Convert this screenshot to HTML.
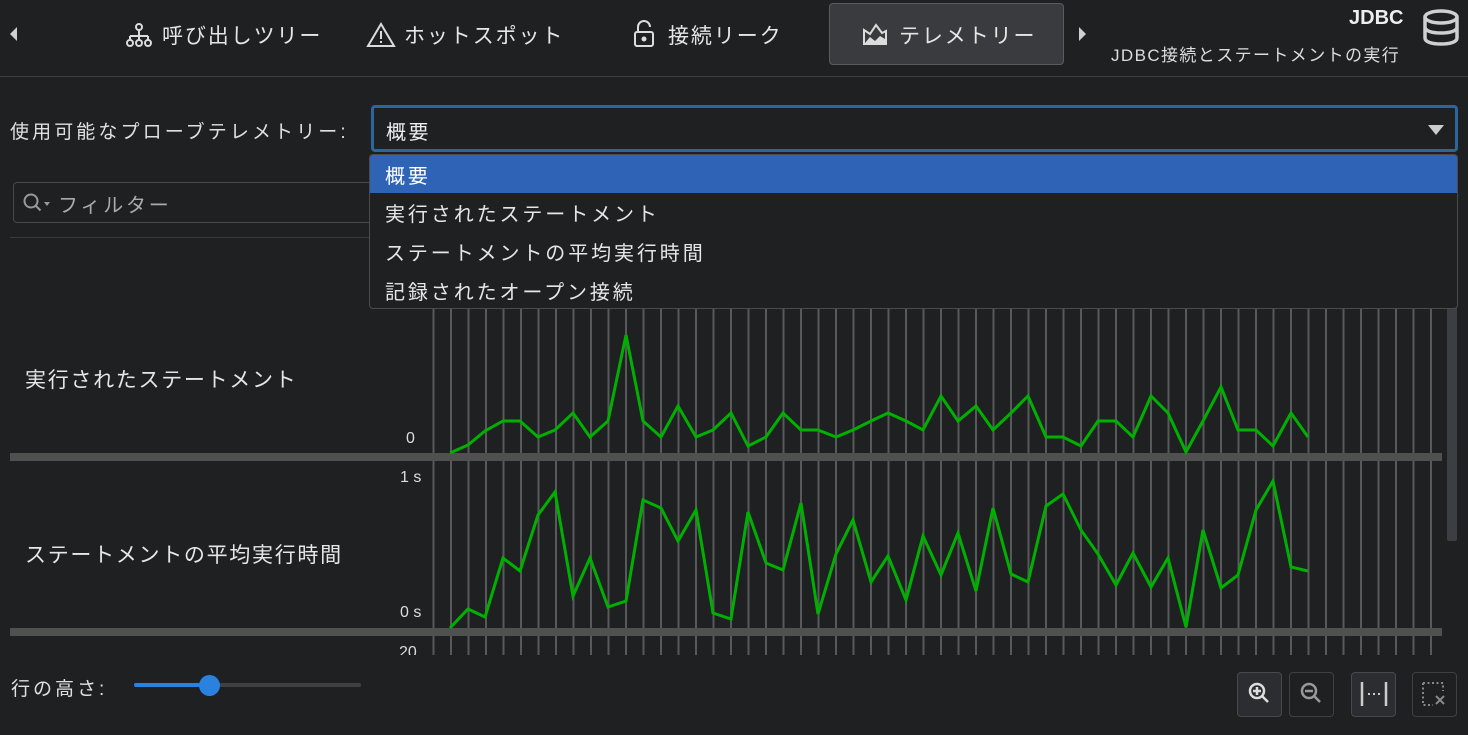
<!DOCTYPE html>
<html><head><meta charset="utf-8">
<style>
*{margin:0;padding:0;box-sizing:border-box}
body{width:1468px;height:735px;background:#1f2022;color:#dcdcdc;font-family:"Liberation Sans","Noto Sans CJK JP",sans-serif;position:relative;overflow:hidden}
.a{position:absolute;white-space:nowrap}
.tab{font-size:21px;color:#e6e6e6;letter-spacing:1.9px}
.it{font-size:20px;color:#e6e6e6;letter-spacing:2.9px}
</style></head><body>
<!-- toolbar -->
<svg class="a" style="left:8px;top:26px" width="10" height="16"><path d="M9 1 L2 8 L9 15Z" fill="#d0d0d0"/></svg>
<svg class="a" style="left:125px;top:22px" width="28" height="26" fill="none" stroke="#dcdcdc" stroke-width="2"><circle cx="14" cy="5" r="3"/><path d="M14 8v6M5 14h18M5 14v4M14 14v4M23 14v4"/><circle cx="5" cy="21" r="3"/><circle cx="14" cy="21" r="3"/><circle cx="23" cy="21" r="3"/></svg>
<div class="a tab" style="left:162px;top:20px">呼び出しツリー</div>
<svg class="a" style="left:366px;top:22px" width="30" height="26" fill="none" stroke="#dcdcdc" stroke-width="2"><path d="M15 2 L28 24 H2Z"/><path d="M15 9v8M15 19v2"/></svg>
<div class="a tab" style="left:404px;top:20px">ホットスポット</div>
<svg class="a" style="left:633px;top:20px" width="22" height="28" fill="none" stroke="#dcdcdc" stroke-width="2"><path d="M5 12V7a6 6 0 0 1 12 0"/><rect x="2" y="12" width="18" height="14" rx="2"/><circle cx="11" cy="19" r="1.5" fill="#dcdcdc"/></svg>
<div class="a tab" style="left:668px;top:20px">接続リーク</div>
<div class="a" style="left:829px;top:3px;width:235px;height:62px;background:#3a3b3e;border:1px solid #5a5b5e;border-radius:4px"></div>
<svg class="a" style="left:862px;top:22px" width="26" height="24"><path d="M2 22V8l6 4 6-9 6 8 4-2v13Z" fill="none" stroke="#dcdcdc" stroke-width="2"/><path d="M3 21l5-6 5 4 5-5 5 3v4H3Z" fill="#dcdcdc"/></svg>
<div class="a tab" style="left:899px;top:20px">テレメトリー</div>
<svg class="a" style="left:1078px;top:26px" width="10" height="16"><path d="M1 1 L8 8 L1 15Z" fill="#d0d0d0"/></svg>
<div class="a" style="left:1349px;top:7px;font-size:20px;font-weight:bold;color:#eee">JDBC</div>
<div class="a" style="left:1111px;top:41px;font-size:17px;color:#ddd;letter-spacing:1.4px">JDBC接続とステートメントの実行</div>
<svg class="a" style="left:1422px;top:9px" width="38" height="38" fill="none" stroke="#d0d0d0" stroke-width="3.5"><ellipse cx="19" cy="8" rx="16" ry="6"/><path d="M3 8v21c0 4 7 6 16 6s16-2 16-6V8M3 18c0 4 7 6 16 6s16-2 16-6"/></svg>
<div class="a" style="left:0;top:76px;width:1468px;height:1px;background:#3e3f42"></div>
<!-- combo -->
<div class="a" style="left:10px;top:117px;font-size:19px;color:#e0e0e0;letter-spacing:3.1px">使用可能なプローブテレメトリー:</div>
<div class="a" style="left:371px;top:105px;width:1087px;height:47px;border:3px solid #2b679f;border-radius:4px;background:#1f2022"></div>
<div class="a" style="left:386px;top:116px;font-size:20px;color:#eee;letter-spacing:2.5px">概要</div>
<svg class="a" style="left:1427px;top:124px" width="18" height="12"><path d="M1 1h16L9 11Z" fill="#ccc"/></svg>
<!-- filter -->
<div class="a" style="left:13px;top:182px;width:370px;height:41px;border:1px solid #48494c;border-radius:4px"></div>
<svg class="a" style="left:22px;top:192px" width="30" height="22" fill="none" stroke="#999" stroke-width="2"><circle cx="9" cy="9" r="6.5"/><path d="M13.5 13.5l5 5"/><path d="M22 10h6l-3 4Z" fill="#999" stroke="none"/></svg>
<div class="a" style="left:58px;top:189px;font-size:20px;color:#aaa;letter-spacing:2.8px">フィルター</div>
<div class="a" style="left:10px;top:237px;width:1448px;height:1px;background:#3a3b3e"></div>
<!-- charts -->
<svg class="a" style="left:0;top:0" width="1468" height="735">
<defs><pattern id="g" x="432.5" y="0" width="17.5" height="10" patternUnits="userSpaceOnUse"><rect x="0" y="0" width="2" height="10" fill="#58595b"/></pattern></defs>
<rect x="432" y="300" width="1000" height="355" fill="url(#g)"/>
<rect x="10" y="453" width="1432" height="8" fill="#505050"/>
<rect x="10" y="628" width="1432" height="8" fill="#505050"/>
<rect x="1447" y="305" width="10" height="236" rx="2" fill="#3c3f42"/>
<polyline fill="none" stroke="#00b000" stroke-width="3" stroke-linejoin="miter" points="450,453 468,445 485,431 503,421 520,421 538,437 555,430 573,413 590,437 608,421 626,335 643,421 661,437 678,406 696,437 713,430 731,413 748,446 766,437 783,413 801,430 818,430 836,437 853,430 871,421 888,413 906,421 923,430 941,396 958,421 976,406 993,430 1011,413 1028,396 1046,437 1063,437 1081,446 1098,421 1116,421 1133,437 1151,396 1168,413 1186,452 1203,421 1221,387 1238,430 1256,430 1273,446 1291,413 1308,437"/>
<polyline fill="none" stroke="#00b000" stroke-width="3" points="450,628 468,609 485,617 503,558 520,571 538,515 555,492 573,596 590,558 608,607 626,601 643,500 661,508 678,541 696,510 713,613 731,619 748,512 766,563 783,570 801,503 818,614 836,554 853,520 871,582 888,556 906,600 923,536 941,575 958,533 976,591 993,508 1011,574 1028,582 1046,506 1063,494 1081,530 1098,554 1116,585 1133,553 1151,587 1168,558 1186,627 1203,530 1221,588 1238,575 1256,510 1273,481 1291,567 1308,571"/>
</svg>
<div class="a" style="left:0;top:655px;width:1468px;height:80px;background:#1f2022"></div>
<div class="a" style="left:25px;top:364px;font-size:21px;color:#e6e6e6;letter-spacing:1.7px">実行されたステートメント</div>
<div class="a" style="left:25px;top:539px;font-size:21px;color:#e6e6e6;letter-spacing:1.7px">ステートメントの平均実行時間</div>
<div class="a" style="left:406px;top:430px;font-size:16px;color:#ddd">0</div>
<div class="a" style="left:400px;top:469px;font-size:16px;color:#ddd">1 s</div>
<div class="a" style="left:400px;top:604px;font-size:16px;color:#ddd">0 s</div>
<div class="a" style="left:399px;top:644px;font-size:16px;color:#ddd;height:11px;overflow:hidden">20</div>
<!-- dropdown popup -->
<div class="a" style="left:369px;top:154px;width:1089px;height:155px;background:#1f2022;border:1px solid #4a4b4e;border-radius:4px;overflow:hidden">
<div style="height:38px;background:#2f63b5"></div>
</div>
<div class="a it" style="left:385px;top:160px;color:#fff">概要</div>
<div class="a it" style="left:385px;top:198px">実行されたステートメント</div>
<div class="a it" style="left:385px;top:237px">ステートメントの平均実行時間</div>
<div class="a it" style="left:385px;top:276px">記録されたオープン接続</div>
<!-- bottom -->
<div class="a" style="left:11px;top:674px;font-size:19px;color:#e0e0e0;letter-spacing:3px">行の高さ:</div>
<div class="a" style="left:134px;top:683px;width:227px;height:4px;background:#3d4143;border-radius:2px"></div>
<div class="a" style="left:134px;top:683px;width:76px;height:4px;background:#2b82de;border-radius:2px"></div>
<div class="a" style="left:199px;top:675px;width:21px;height:21px;background:#2b82de;border-radius:50%"></div>
<div class="a" style="left:1237px;top:672px;width:45px;height:45px;background:#2c2d30;border:1px solid #48494c;border-radius:4px"></div>
<svg class="a" style="left:1246px;top:680px" width="28" height="28" fill="none" stroke="#ddd" stroke-width="2.5"><circle cx="11" cy="11" r="7"/><path d="M16 16l6 6M11 7v8M7 11h8"/></svg>
<div class="a" style="left:1289px;top:672px;width:45px;height:45px;background:#1f2022;border:1px solid #3f4043;border-radius:4px"></div>
<svg class="a" style="left:1298px;top:680px" width="28" height="28" fill="none" stroke="#999" stroke-width="2.5"><circle cx="11" cy="11" r="7"/><path d="M16 16l6 6M7 11h8"/></svg>
<div class="a" style="left:1351px;top:672px;width:45px;height:45px;background:#2c2d30;border:1px solid #48494c;border-radius:4px"></div>
<svg class="a" style="left:1359px;top:680px" width="30" height="28"><path d="M3 2v24M27 2v24" stroke="#ccc" stroke-width="2.5"/><path d="M9 14h2M14 14h2M19 14h2" stroke="#ccc" stroke-width="2"/></svg>
<div class="a" style="left:1412px;top:672px;width:45px;height:45px;border:1px solid #3f4043;border-radius:4px"></div>
<svg class="a" style="left:1420px;top:680px" width="30" height="28" fill="none" stroke="#888" stroke-width="2"><path d="M3 3h20v8M3 3v22h10" stroke-dasharray="2 2.5"/><path d="M16 16l8 8M24 16l-8 8"/></svg>
</body></html>
